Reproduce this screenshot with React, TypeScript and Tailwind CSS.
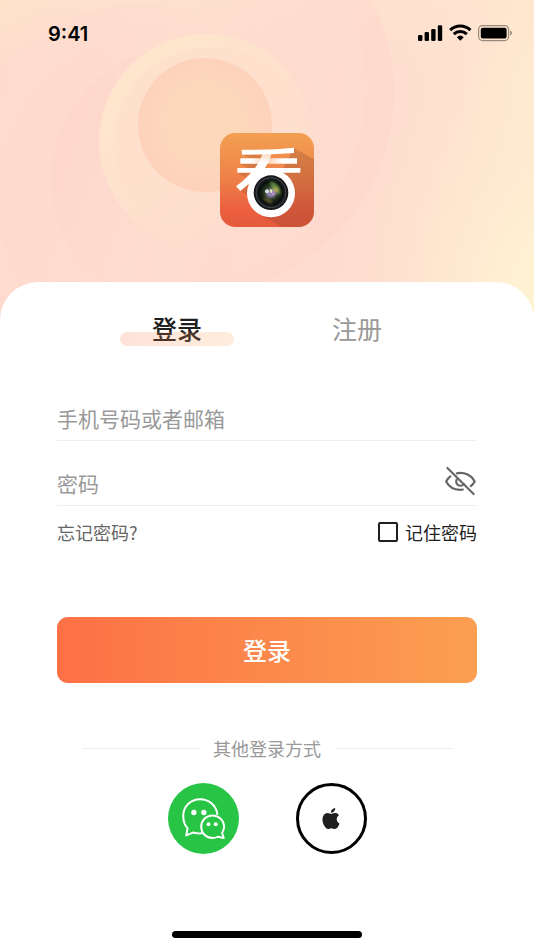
import { useState } from "react";

function Backdrop() {
  return (
    <svg
      className="absolute inset-x-0 top-0 w-full h-[330px]"
      viewBox="0 0 534 330"
      preserveAspectRatio="xMidYMid slice"
      aria-hidden="true"
    >
      <defs>
        <linearGradient id="base" x1="0" y1="0" x2="1" y2="0">
          <stop offset="0" stopColor="#fed9cd" />
          <stop offset="0.7" stopColor="#feddcf" />
          <stop offset="0.87" stopColor="#fee3d0" />
          <stop offset="1" stopColor="#ffebd1" />
        </linearGradient>
        <radialGradient id="glow" gradientUnits="userSpaceOnUse" cx="575" cy="295" r="250">
          <stop offset="0" stopColor="#fff6d4" />
          <stop offset="0.25" stopColor="#fff2d3" stopOpacity="0.85" />
          <stop offset="0.6" stopColor="#ffead0" stopOpacity="0.45" />
          <stop offset="1" stopColor="#fee6cf" stopOpacity="0" />
        </radialGradient>
        <linearGradient id="top" x1="0" y1="0" x2="0" y2="1">
          <stop offset="0" stopColor="#fee4cf" stopOpacity="0.7" />
          <stop offset="0.25" stopColor="#fee2cf" stopOpacity="0" />
        </linearGradient>
        <radialGradient id="corner" gradientUnits="userSpaceOnUse" cx="0" cy="0" r="70">
          <stop offset="0" stopColor="#fee4ca" />
          <stop offset="1" stopColor="#fee0cc" stopOpacity="0" />
        </radialGradient>
        <linearGradient id="rightArc" x1="0" y1="0" x2="1" y2="0.3">
          <stop offset="0.5" stopColor="#fed7cd" stopOpacity="0" />
          <stop offset="1" stopColor="#fed6cc" stopOpacity="0.6" />
        </linearGradient>
        <linearGradient id="rightInner" x1="0" y1="0" x2="1" y2="0">
          <stop offset="0.35" stopColor="#fee0d0" stopOpacity="0" />
          <stop offset="1" stopColor="#feddd0" stopOpacity="0.6" />
        </linearGradient>
        <linearGradient id="leftArc" x1="0" y1="0.1" x2="0.8" y2="0.3">
          <stop offset="0" stopColor="#fedace" />
          <stop offset="0.5" stopColor="#feddce" stopOpacity="0.8" />
          <stop offset="1" stopColor="#fee0cf" stopOpacity="0" />
        </linearGradient>
        <linearGradient id="leftInner" x1="0" y1="0.3" x2="0.9" y2="0.6">
          <stop offset="0" stopColor="#fed3ca" stopOpacity="0.6" />
          <stop offset="0.3" stopColor="#fed8cd" stopOpacity="0.6" />
          <stop offset="0.7" stopColor="#fee0cf" stopOpacity="0" />
        </linearGradient>
        <linearGradient id="halo" x1="0.1" y1="0" x2="0.85" y2="0.85">
          <stop offset="0" stopColor="#fee7cc" />
          <stop offset="0.6" stopColor="#fee1cd" />
          <stop offset="1" stopColor="#feddce" stopOpacity="0" />
        </linearGradient>
        <linearGradient id="haloInner" x1="0" y1="0" x2="0.6" y2="1">
          <stop offset="0" stopColor="#fee1cd" />
          <stop offset="0.5" stopColor="#fee0cd" />
          <stop offset="1" stopColor="#fee1cd" stopOpacity="0" />
        </linearGradient>
        <radialGradient id="sun" cx="0.5" cy="0.48" r="0.52">
          <stop offset="0" stopColor="#fdd9bb" />
          <stop offset="0.6" stopColor="#fdd7bb" />
          <stop offset="1" stopColor="#fed1bb" />
        </radialGradient>
      </defs>
      <rect width="534" height="330" fill="url(#base)" />
      <rect width="534" height="330" fill="url(#top)" />
      <rect width="534" height="330" fill="url(#corner)" />
      <circle cx="193" cy="93" r="201" fill="url(#rightArc)" />
      <circle cx="166" cy="88" r="200" fill="url(#rightInner)" />
      <circle cx="142" cy="182" r="178" fill="url(#leftArc)" />
      <circle cx="172" cy="200" r="174" fill="url(#leftInner)" opacity="0.5" />
      <circle cx="184" cy="180" r="133" fill="url(#leftInner)" />
      <rect width="534" height="330" fill="url(#glow)" />
      <circle cx="206" cy="141" r="107" fill="url(#halo)" />
      <circle cx="211" cy="144" r="97" fill="url(#haloInner)" />
      <circle cx="205" cy="125" r="67" fill="url(#sun)" />
    </svg>
  );
}

function StatusBar() {
  return (
    <div className="flex items-start justify-between pt-[22px] pl-12 pr-[21px]">
      <span className="font-[Inter] font-semibold text-[20px] leading-6 text-black">9:41</span>
      <svg className="w-[96px] h-[22px]" viewBox="0 0 96 22" aria-hidden="true">
        <rect x="1" y="13" width="4.4" height="6" rx="1.3" />
        <rect x="7.6" y="10" width="4.4" height="9" rx="1.3" />
        <rect x="14.2" y="7" width="4.4" height="12" rx="1.3" />
        <rect x="20.8" y="3.3" width="4.4" height="15.7" rx="1.3" />
        <g fill="none" stroke="#000" strokeWidth="3">
          <path d="M33.2 8.2a14.5 14.5 0 0 1 20.2 0" />
          <path d="M36.8 12.1a9.3 9.3 0 0 1 13 0" />
        </g>
        <path d="M39.9 15.2a5 5 0 0 1 6.8 0L43.3 18.8z" />
        <rect x="61.6" y="3.6" width="30" height="15" rx="4" fill="none" stroke="#000" strokeOpacity="0.4" strokeWidth="1.2" />
        <rect x="63.8" y="5.7" width="25.8" height="10.8" rx="2" />
        <path d="M93.2 8.6c1.1.4 1.8 1.4 1.8 2.5s-.7 2.1-1.8 2.5z" fillOpacity="0.4" />
      </svg>
    </div>
  );
}

function Logo() {
  return (
    <svg className="w-[94px] h-[94px]" viewBox="30 33 282 282" role="img" aria-label="看">
      <defs>
        <linearGradient id="tile" x1="0" y1="0" x2="0" y2="1">
          <stop offset="0" stopColor="#f3a052" />
          <stop offset="0.5" stopColor="#ee7f47" />
          <stop offset="0.8" stopColor="#ec6040" />
          <stop offset="1" stopColor="#e65a3d" />
        </linearGradient>
        <linearGradient id="fade" x1="0" y1="0" x2="1" y2="0">
          <stop offset="0" stopColor="#fff" />
          <stop offset="0.2" stopColor="#fff" />
          <stop offset="0.42" stopColor="#f9ccae" />
          <stop offset="0.54" stopColor="#fbdcc6" />
          <stop offset="0.75" stopColor="#fff" />
          <stop offset="1" stopColor="#fff" />
        </linearGradient>
        <linearGradient id="stem" x1="0" y1="0" x2="0" y2="1">
          <stop offset="0" stopColor="#f9d3b8" />
          <stop offset="0.25" stopColor="#fff" />
          <stop offset="1" stopColor="#fff" />
        </linearGradient>
        <radialGradient id="lens">
          <stop offset="0" stopColor="#5d6a42" />
          <stop offset="0.5" stopColor="#283a22" />
          <stop offset="1" stopColor="#060a08" />
        </radialGradient>
        <filter id="soft" x="-50%" y="-50%" width="200%" height="200%">
          <feGaussianBlur stdDeviation="2.5" />
        </filter>
        <clipPath id="tileClip">
          <rect x="30" y="33" width="282" height="282" rx="46" />
        </clipPath>
      </defs>
      <g clipPath="url(#tileClip)">
        <rect x="30" y="33" width="282" height="282" fill="url(#tile)" />
        <path d="M252 78l60 34v203h-96l-69-40z" fill="#7a3a2a" fillOpacity="0.24" />
        <path d="M96 97l25 12h40l5-12zM91 125l24 13h24l16-13zM82 152l22 14 20-14zM91 207l24 14 6-34z" fill="#7a3a2a" fillOpacity="0.2" />
      </g>
      <path d="M91 109h170v16H91z" fill="url(#fade)" />
      <path d="M82 138h189v14H82z" fill="#fff" />
      <path d="M158 94h27c-5 19-12 32-21 45l-35 36-38 32-13-14c42-32 66-58 80-99z" fill="url(#stem)" />
      <path d="M95 83Q190 84 252 77v16Q190 98 96 98z" fill="#fff" />
      <circle cx="183" cy="214" r="72" fill="#fff" />
      <circle cx="183" cy="212" r="52" fill="#17191c" />
      <circle cx="183" cy="212" r="45" fill="none" stroke="#42484c" strokeWidth="3" />
      <circle cx="183" cy="212" r="37" fill="url(#lens)" />
      <g filter="url(#soft)">
        <path d="M180 178q32 6 32 40l-26-6z" fill="#5f8540" />
        <path d="M158 226q10 18 29 20l-5-16z" fill="#56552c" />
        <ellipse cx="183" cy="214" rx="15" ry="12" fill="#9380b2" />
        <ellipse cx="197" cy="203" rx="8" ry="6" fill="#b4ad50" />
      </g>
      <circle cx="171" cy="208" r="6" fill="#dce3df" />
      <path d="M179 202l7 1 1 8-5 2z" fill="#f4f2bb" />
      <circle cx="190" cy="216" r="4" fill="#bd94c3" />
    </svg>
  );
}

function EyeOff() {
  return (
    <svg
      className="w-8 h-8"
      viewBox="1 -1 33 33"
      fill="none"
      stroke="#666"
      strokeWidth="2.2"
      strokeLinecap="round"
      aria-hidden="true"
    >
      <path d="M3.5 2l27 27" />
      <path d="M6.5 10.8C4.3 12.5 2.8 14.6 2.2 16c2.8 5.3 8 8.6 14.2 8.6 1 0 2-.1 3-.3" />
      <path d="M13.2 7.6c7.3-1.7 15 1.6 18.4 8.4-1 2-2.3 3.4-4 4.7" />
      <path d="M13 14c-1.4 3.2.6 6.4 4 6.4 1.4 0 2.6-.7 3.3-1.8" />
    </svg>
  );
}

function WechatIcon() {
  return (
    <svg className="w-[71px] h-[71px]" viewBox="52 158 214 214" aria-hidden="true">
      <g fill="none" stroke="#fff" strokeWidth="6" strokeLinejoin="round">
        <path d="M201 254c-3-28-25-47-52-47-29 0-51 22-51 50 0 16 4 29 13 37l-4 22 22-9c9 3 20 4 30 1" />
        <path d="M186 256c19 0 35 15 35 34 0 8-3 14-6 18l5 16-18-4c-5 3-10 4-16 4-19 0-34-15-34-34s15-34 34-34z" />
      </g>
      <g fill="#fff">
        <circle cx="130" cy="247" r="8" />
        <circle cx="160" cy="247" r="8" />
        <circle cx="174" cy="282" r="6" />
        <circle cx="196" cy="282" r="6" />
      </g>
    </svg>
  );
}

function AppleIcon() {
  return (
    <svg className="w-[18px] h-[21px]" viewBox="2 0 20 24" fill="#1f1f1f" aria-hidden="true">
      <path d="M12.152 6.896c-.948 0-2.415-1.078-3.96-1.04-2.04.027-3.91 1.183-4.961 3.014-2.117 3.675-.546 9.103 1.519 12.09 1.013 1.454 2.208 3.09 3.792 3.039 1.52-.065 2.09-.987 3.935-.987 1.831 0 2.35.987 3.96.948 1.637-.026 2.676-1.48 3.676-2.948 1.156-1.688 1.636-3.325 1.662-3.415-.039-.013-3.182-1.221-3.22-4.857-.026-3.04 2.48-4.494 2.597-4.559-1.429-2.09-3.623-2.324-4.39-2.376-2-.156-3.675 1.09-4.61 1.09zM15.53 3.83c.843-1.012 1.4-2.427 1.245-3.83-1.207.052-2.662.805-3.532 1.818-.78.896-1.454 2.338-1.273 3.714 1.338.104 2.715-.688 3.559-1.701" />
    </svg>
  );
}

function Tab({
  title,
  active,
  onClick,
}: {
  title: string;
  active: boolean;
  onClick: () => void;
}) {
  return (
    <button
      type="button"
      role="tab"
      aria-selected={active}
      onClick={onClick}
      className={`relative text-[25px] leading-9 ${
        active ? "font-medium text-[#1f1f1f]" : "text-[#999]"
      }`}
    >
      {title}
      {active && (
        <span className="absolute bottom-0 inset-x-[33px] h-[14px] rounded-full bg-linear-to-r from-[#fc6f45]/20 to-[#fba051]/20" />
      )}
    </button>
  );
}

export default function App() {
  const [tab, setTab] = useState("login");
  const [visible, setVisible] = useState(false);

  return (
    <div className="relative flex flex-col min-h-screen bg-white font-['Noto_Sans_CJK_SC',sans-serif]">
      <Backdrop />

      <header className="relative h-[282px]">
        <StatusBar />
        <div className="flex justify-center pt-[87px]">
          <Logo />
        </div>
      </header>

      <main className="relative flex flex-col flex-1 rounded-t-[38px] bg-white px-[57px] pt-7">
        <div role="tablist" className="grid grid-cols-2 w-full max-w-[360px] mx-auto">
          <Tab title="登录" active={tab === "login"} onClick={() => setTab("login")} />
          <Tab title="注册" active={tab === "register"} onClick={() => setTab("register")} />
        </div>

        <form className="mt-[50px]" onSubmit={(e) => e.preventDefault()}>
          <input
            type="text"
            aria-label="手机号码或者邮箱"
            placeholder="手机号码或者邮箱"
            className="block w-full h-[45px] border-b border-[#eee] text-[21px] text-[#1f1f1f] placeholder:text-[#999] outline-none"
          />
          <div className="flex items-end mt-5 border-b border-[#eee]">
            <input
              type={visible ? "text" : "password"}
              aria-label="密码"
              placeholder="密码"
              className="flex-1 min-w-0 h-11 text-[21px] text-[#1f1f1f] placeholder:text-[#999] outline-none"
            />
            <button
              type="button"
              aria-label="显示密码"
              className="pb-2"
              onClick={() => setVisible(!visible)}
            >
              <EyeOff />
            </button>
          </div>

          <div className="flex items-center justify-between mt-3 text-[18px] leading-7">
            <a href="#" className="text-[#666]">
              忘记密码?
            </a>
            <label className="flex items-center gap-[7px] text-[#1f1f1f]">
              <input
                type="checkbox"
                className="appearance-none w-5 h-5 border-2 border-[#1f1f1f] rounded-[2px] checked:bg-[#fc7045]"
              />
              记住密码
            </label>
          </div>

          <button
            type="submit"
            className="w-full h-[66px] mt-[71px] rounded-[11px] bg-linear-to-r from-[#fc7045] to-[#fb9f51] text-2xl font-medium text-white"
          >
            登录
          </button>
        </form>

        <div className="flex items-center gap-[14px] mt-[51px] mx-[25px] text-[18px] leading-7 text-[#999]">
          <span className="flex-1 h-px bg-[#eee]" />
          其他登录方式
          <span className="flex-1 h-px bg-[#eee]" />
        </div>

        <div className="flex justify-center gap-[57px] mt-[21px]">
          <button type="button" aria-label="微信" className="w-[71px] h-[71px] rounded-full bg-[#28c445]">
            <WechatIcon />
          </button>
          <button
            type="button"
            aria-label="Apple"
            className="flex items-center justify-center w-[71px] h-[71px] rounded-full border-3 border-black"
          >
            <AppleIcon />
          </button>
        </div>

        <div className="w-[190px] h-[7px] mt-auto mb-3 mx-auto rounded-full bg-black" />
      </main>
    </div>
  );
}
